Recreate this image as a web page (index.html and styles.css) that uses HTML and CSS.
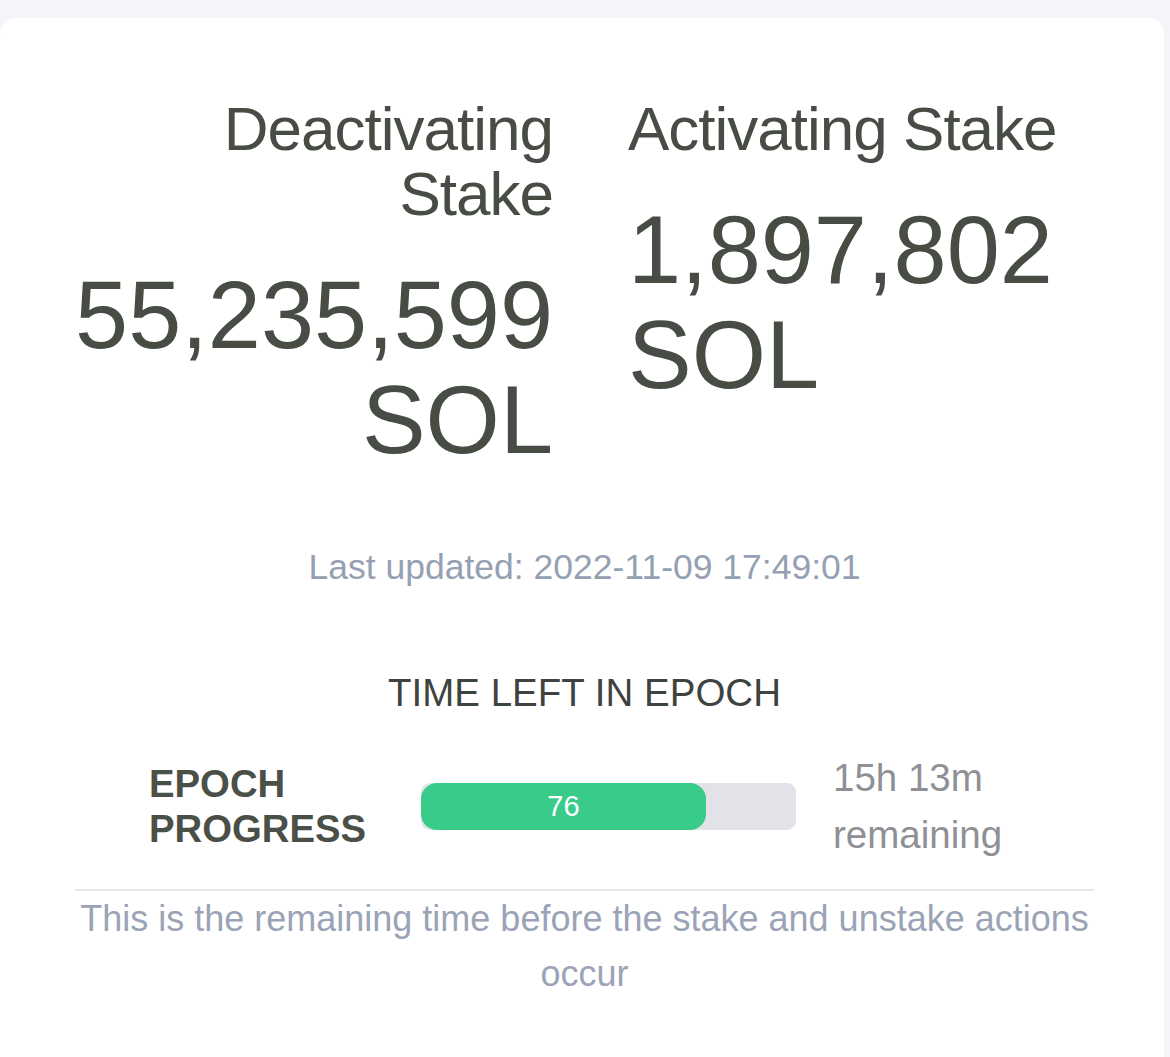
FILE: index.html
```html
<!DOCTYPE html>
<html lang="en">
<head>
<meta charset="utf-8">
<title>Epoch Stake</title>
<link rel="stylesheet" href="styles.css">
</head>
<body>
<main class="card">
  <section class="stakes">
    <div class="stake stake-left">
      <h2 class="stake-title">Deactivating Stake</h2>
      <p class="stake-value">55,235,599 SOL</p>
    </div>
    <div class="stake stake-right">
      <h2 class="stake-title">Activating Stake</h2>
      <p class="stake-value">1,897,802 SOL</p>
    </div>
  </section>

  <p class="updated">Last updated: 2022-11-09 17:49:01</p>

  <h3 class="epoch-heading">TIME LEFT IN EPOCH</h3>

  <div class="epoch-row">
    <div class="epoch-label">EPOCH<br>PROGRESS</div>
    <div class="bar">
      <div class="bar-fill" style="width: 76%;">76</div>
    </div>
    <div class="remaining">15h 13m<br>remaining</div>
  </div>

  <p class="note">This is the remaining time before the stake and unstake actions occur</p>
</main>
</body>
</html>
```

FILE: styles.css
```css
* {
  box-sizing: border-box;
}

html, body {
  margin: 0;
  padding: 0;
}

body {
  background: #f4f4f9;
  font-family: "Liberation Sans", Arial, Helvetica, sans-serif;
  color: #474c44;
  padding: 18px 6px 0 0;
}

.card {
  background: #ffffff;
  border-radius: 16px 16px 0 0;
  padding: 78px 70px 80px 75px;
  min-height: 1039px;
}

.stakes {
  display: grid;
  grid-template-columns: 478px 1fr;
  column-gap: 75px;
  align-items: start;
}

.stake-left {
  text-align: right;
}

.stake-right {
  text-align: left;
}

.stake-title {
  margin: 0;
  font-weight: 400;
  font-size: 62px;
  line-height: 65px;
  letter-spacing: -1px;
  color: #474c44;
}

.stake-value {
  margin: 37px 0 0;
  font-size: 95.5px;
  line-height: 105px;
  color: #474c44;
}

.updated {
  margin: 69px 0 0;
  text-align: center;
  font-size: 35.5px;
  line-height: 50px;
  color: #95a0b3;
}

.epoch-heading {
  margin: 76px 0 0;
  text-align: center;
  font-weight: 400;
  font-size: 38.5px;
  line-height: 50px;
  color: #3f433f;
}

.epoch-row {
  margin-top: 31px;
  display: flex;
  align-items: center;
  padding-left: 74px;
  padding-bottom: 26px;
  border-bottom: 2px solid #e6e8ec;
}

.epoch-label {
  width: 272px;
  flex: none;
  font-weight: 700;
  font-size: 38.3px;
  line-height: 45px;
  color: #4a4f47;
}

.bar {
  width: 375px;
  height: 47px;
  flex: none;
  background: #e2e3e8;
  border-radius: 9px;
  margin-right: 37px;
}

.bar-fill {
  height: 100%;
  background: #38cb89;
  border-radius: 16px;
  color: #ffffff;
  font-size: 29px;
  line-height: 47px;
  text-align: center;
}

.remaining {
  font-size: 38.5px;
  line-height: 57px;
  color: #8e9096;
}

.note {
  margin: 0;
  text-align: center;
  font-size: 36px;
  line-height: 55px;
  color: #9aa4b6;
}
```
